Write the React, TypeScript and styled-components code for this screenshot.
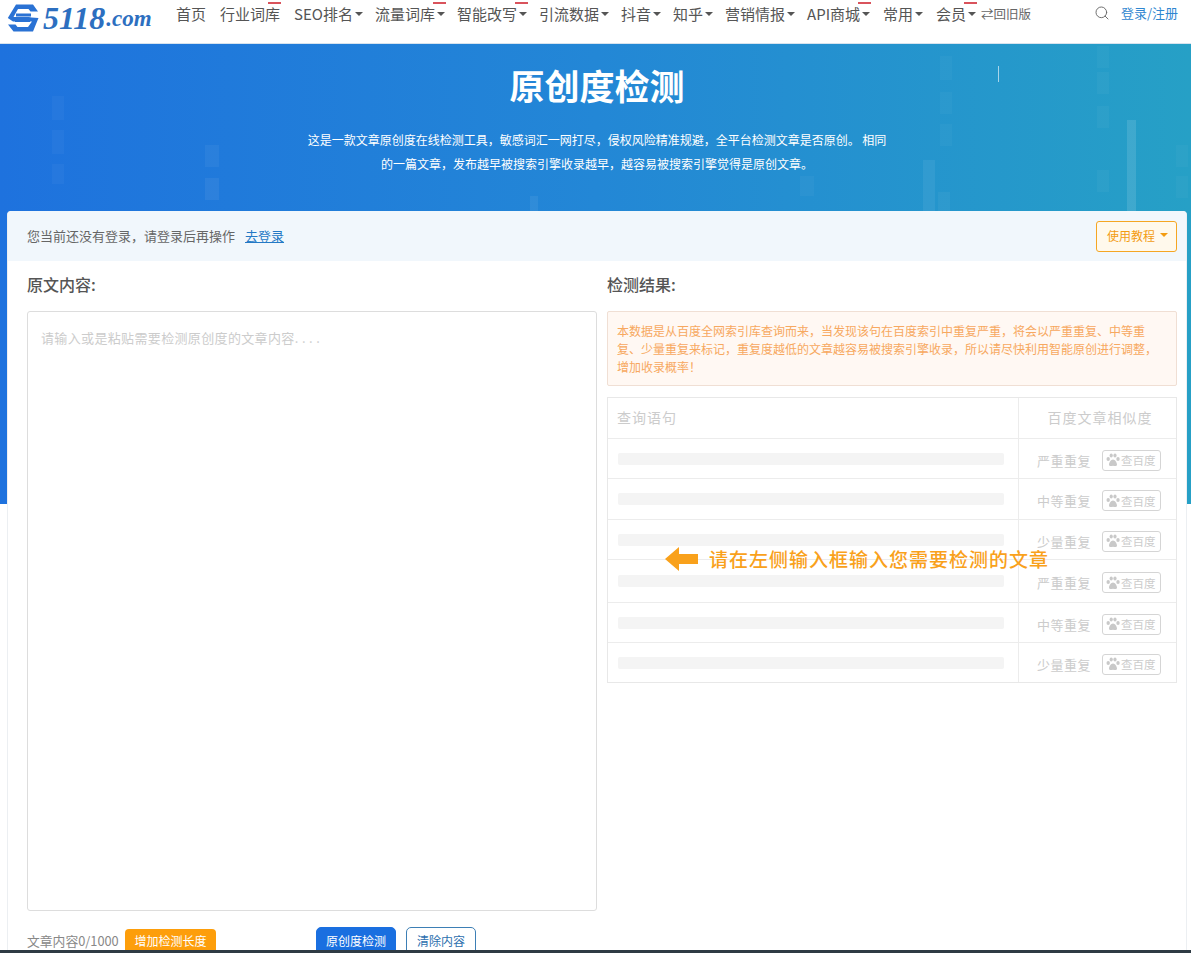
import React from "react";
import styled, { createGlobalStyle } from "styled-components";
import { Search } from "lucide-react";

const Global = createGlobalStyle`
  html, body { margin: 0; padding: 0; height: 953px; overflow: hidden; background: #fff; }
  body { font-family: "Noto Sans CJK SC", "Liberation Sans", sans-serif; color: #555; }
  * { box-sizing: border-box; }
`;

const Page = styled.div`
  display: flex;
  flex-direction: column;
  height: 953px;
  overflow: hidden;
`;

const Header = styled.header`
  flex: none;
  height: 44px;
  display: flex;
  align-items: flex-start;
  padding: 3px 13px 0 7px;
  background: #fff;
  border-bottom: 1px solid #d7e3ee;
`;

const Logo = styled.a`
  flex: none;
  width: 169px;
  height: 30px;
  display: flex;
  align-items: center;
  gap: 4px;
  color: #2d6fc0;
  font-family: "Liberation Serif", serif;
  font-style: italic;
  font-weight: 700;
  white-space: nowrap;
`;

const LogoDigits = styled.span`
  font-size: 32px;
  line-height: 36px;
`;

const LogoCom = styled.span`
  font-size: 23px;
  line-height: 36px;
  margin-left: -3px;
  padding-top: 2px;
`;

const Nav = styled.nav`
  display: flex;
  align-items: center;
  height: 23px;
  margin-top: -1px;
  flex: 1;
`;

const NavItem = styled.span<{ $gap?: number }>`
  position: relative;
  display: inline-flex;
  align-items: center;
  font-size: 15px;
  line-height: 23px;
  color: #555;
  white-space: nowrap;
  margin-right: ${(p) => p.$gap ?? 12}px;
`;

const Caret = styled.i`
  display: inline-block;
  width: 0;
  height: 0;
  margin-left: 2px;
  border-left: 4px solid transparent;
  border-right: 4px solid transparent;
  border-top: 4px solid #555;
`;

const HotMark = styled.b`
  position: absolute;
  top: 0;
  right: -1px;
  width: 13px;
  height: 2px;
  background: #d9535c;
`;

const OldLink = styled.span`
  font-size: 12.5px;
  line-height: 23px;
  color: #666;
  margin-left: -7px;
  white-space: nowrap;
`;

const RightTools = styled.div`
  display: flex;
  align-items: center;
  gap: 11px;
  height: 23px;
  margin-top: -2px;
  color: #666;
`;

const LoginLink = styled.a`
  font-size: 13px;
  color: #2f86d0;
  white-space: nowrap;
`;

const Hero = styled.section`
  position: relative;
  flex: none;
  height: 460px;
  padding: 15px 0 0 3px;
  text-align: center;
  background: linear-gradient(90deg, #1e72de 0%, #2387d6 50%, #26a0c6 100%);
  overflow: hidden;
`;

const HeroBars = styled.svg`
  position: absolute;
  left: 0;
  top: 0;
  width: 1191px;
  height: 170px;
  opacity: 0.6;
`;

const HeroTitle = styled.h1`
  position: relative;
  margin: 0;
  font-size: 35px;
  line-height: 52px;
  font-weight: 700;
  color: #fff;
`;

const HeroText = styled.p`
  position: relative;
  width: 584px;
  margin: 17px auto 0;
  font-size: 12px;
  line-height: 24px;
  color: #fff;
`;

const Card = styled.main`
  position: relative;
  flex: none;
  height: 760px;
  margin: -293px 4px 0 7px;
  background: #fff;
  border: 1px solid #eceff2;
  border-top: 0;
  border-radius: 4px 4px 0 0;
`;

const NoticeBar = styled.div`
  display: flex;
  align-items: center;
  justify-content: space-between;
  height: 50px;
  padding: 0 9px 0 19px;
  background: #f1f7fc;
  border-radius: 4px 4px 0 0;
  font-size: 13px;
  color: #666;
`;

const NoticeText = styled.span`
  padding-bottom: 2px;
`;

const NoticeLink = styled.a`
  margin-left: 10px;
  color: #2479c5;
  text-decoration: underline;
`;

const GuideButton = styled.button`
  display: flex;
  align-items: center;
  gap: 5px;
  width: 81px;
  height: 31px;
  padding: 0 0 2px 10px;
  background: #fff9ec;
  border: 1px solid #f5a623;
  border-radius: 3px;
  color: #f39c12;
  font: 12px "Noto Sans CJK SC", sans-serif;
`;

const GuideCaret = styled.i`
  width: 0;
  height: 0;
  border-left: 4px solid transparent;
  border-right: 4px solid transparent;
  border-top: 4px solid #f39c12;
`;

const Columns = styled.div`
  display: grid;
  grid-template-columns: 570px 570px;
  gap: 10px;
  padding: 0 9px 0 19px;
`;

const Column = styled.div`
  position: relative;
  display: flex;
  flex-direction: column;
`;

const SectionTitle = styled.h2`
  margin: 0;
  height: 50px;
  font-size: 16px;
  line-height: 46px;
  font-weight: 500;
  color: #555;
`;

const Editor = styled.textarea`
  display: block;
  width: 570px;
  height: 600px;
  padding: 16px 13px;
  border: 1px solid #ddd;
  border-radius: 3px;
  outline: none;
  resize: none;
  font: 13px/20px "Noto Sans CJK SC", sans-serif;
  letter-spacing: 0.35px;
  &::placeholder { color: #ccc; }
`;

const FooterBar = styled.div`
  display: flex;
  align-items: flex-start;
  height: 32px;
  margin-top: 16px;
  font-size: 12px;
`;

const CountText = styled.span`
  width: 98px;
  padding-top: 5px;
  font-size: 12.8px;
  line-height: 18px;
  color: #888;
  white-space: nowrap;
`;

const UpgradeButton = styled.button`
  width: 91px;
  height: 26px;
  margin: 2px 100px 0 0;
  padding: 0 0 3px;
  border: 0;
  border-radius: 4px;
  background: #fd9e0b;
  color: #fff;
  font: 12px "Noto Sans CJK SC", sans-serif;
`;

const ActionButton = styled.button<{ $primary?: boolean }>`
  width: ${(p) => (p.$primary ? 80 : 70)}px;
  height: 30px;
  margin-right: 10px;
  padding: 0 0 3px;
  border-radius: 5px;
  border: 1px solid ${(p) => (p.$primary ? "#1a6fe0" : "#3d7fb5")};
  background: ${(p) => (p.$primary ? "#1a6fe0" : "#fff")};
  color: ${(p) => (p.$primary ? "#fff" : "#2c6fae")};
  font: 12px "Noto Sans CJK SC", sans-serif;
`;

const Alert = styled.div`
  height: 75px;
  padding: 10px 9px;
  background: #fff8f3;
  border: 1px solid #f0dfd4;
  border-radius: 2px;
  font-size: 12px;
  line-height: 18px;
  color: #f7a860;
`;

const Table = styled.div`
  margin-top: 11px;
  border: 1px solid #e8e8e8;
`;

const Row = styled.div<{ $h: number }>`
  display: grid;
  grid-template-columns: 411px 1fr;
  height: ${(p) => p.$h}px;
  border-bottom: 1px solid #ececec;
  &:last-child { border-bottom: 0; }
`;

const QueryCell = styled.div`
  display: flex;
  align-items: center;
  padding-left: 10px;
  border-right: 1px solid #ececec;
  font-size: 14px;
  letter-spacing: 1px;
  color: #ccc;
`;

const HeadQueryCell = styled(QueryCell)`
  padding: 0 0 2px 9px;
`;

const HeadCell = styled.div`
  display: flex;
  align-items: center;
  justify-content: center;
  padding: 0 0 2px 5px;
  font-size: 14px;
  letter-spacing: 1px;
  color: #ccc;
`;

const Skeleton = styled.div`
  width: 386px;
  height: 12px;
  background: #f4f4f4;
  border-radius: 2px;
`;

const ResultCell = styled.div`
  display: flex;
  align-items: center;
  justify-content: flex-end;
  gap: 11px;
  padding: 3px 15px 0 0;
  font-size: 13px;
  letter-spacing: 0.5px;
  color: #ccc;
`;

const BaiduButton = styled.span`
  display: inline-flex;
  align-items: center;
  gap: 1px;
  width: 59px;
  height: 21px;
  padding-left: 3px;
  border: 1px solid #d5d5d5;
  border-radius: 3px;
  font-size: 11.5px;
  letter-spacing: 0;
  color: #ccc;
  white-space: nowrap;
`;

const Hint = styled.div`
  position: absolute;
  left: 58px;
  top: 284px;
  display: flex;
  align-items: center;
  gap: 11px;
  color: #f9a11b;
  font-size: 19px;
  line-height: 28px;
  font-weight: 500;
  letter-spacing: 1px;
  white-space: nowrap;
`;

const BottomStrip = styled.div`
  position: fixed;
  left: 0;
  right: 0;
  bottom: 0;
  height: 3px;
  background: #2f3b44;
`;

const navItems: { t: string; caret?: boolean; hot?: boolean; gap?: number }[] = [
  { t: "首页", gap: 14 },
  { t: "行业词库", hot: true, gap: 14 },
  { t: "SEO排名", caret: true },
  { t: "流量词库", caret: true, hot: true },
  { t: "智能改写", caret: true, hot: true },
  { t: "引流数据", caret: true },
  { t: "抖音", caret: true },
  { t: "知乎", caret: true },
  { t: "营销情报", caret: true },
  { t: "API商城", caret: true, hot: true, gap: 13 },
  { t: "常用", caret: true, gap: 13 },
  { t: "会员", caret: true, hot: true },
];

const rows = [
  { label: "严重重复", h: 40 },
  { label: "中等重复", h: 41 },
  { label: "少量重复", h: 40 },
  { label: "严重重复", h: 43 },
  { label: "中等重复", h: 40 },
  { label: "少量重复", h: 39 },
];

const bars = [
  [52, 96, 12, 24, 0.06], [52, 130, 12, 24, 0.06], [52, 164, 12, 20, 0.06],
  [205, 145, 14, 22, 0.08], [205, 178, 14, 22, 0.1],
  [530, 196, 8, 15, 0.1], [800, 176, 14, 20, 0.06],
  [940, 56, 12, 24, 0.05], [940, 92, 12, 22, 0.05], [940, 124, 12, 22, 0.05],
  [923, 160, 12, 51, 0.1], [938, 192, 12, 20, 0.07],
  [1097, 46, 12, 22, 0.05], [1097, 72, 12, 22, 0.06], [1097, 106, 12, 22, 0.06], [1097, 170, 12, 22, 0.06],
  [1127, 120, 9, 91, 0.2], [1176, 145, 12, 22, 0.05], [1176, 176, 12, 22, 0.05],
];

function LogoMark() {
  return (
    <svg width="32" height="30" viewBox="0 0 32 30" fill="none">
      <path
        d="M9 1.5H26L31 8.5H23.5L21.5 6H11L6.5 14H22L24.5 14.5L31.5 15L26 28.5H6.5L1 21.5H8.5L10.5 24H21L25 18.5H6L0.8 15Z"
        fill="#2a72d4"
      />
      <rect x="9" y="10.5" width="15" height="3" fill="#2a72d4" />
      <rect x="8" y="16" width="15" height="3" fill="#2a72d4" />
    </svg>
  );
}

function Paw() {
  return (
    <svg width="14" height="14" viewBox="0 0 14 14" fill="#c9c9c9">
      <ellipse cx="2.2" cy="6" rx="1.7" ry="2" />
      <ellipse cx="5.2" cy="2.6" rx="1.6" ry="2" />
      <ellipse cx="9" cy="2.6" rx="1.6" ry="2" />
      <ellipse cx="12" cy="6" rx="1.7" ry="2" />
      <path d="M7 6.5c2 0 4 3 4 5 0 1.5-1.6 1.8-4 1.2-2.4.6-4 .3-4-1.2 0-2 2-5 4-5z" />
    </svg>
  );
}

function HintArrow() {
  return (
    <svg width="33" height="24" viewBox="0 0 33 24" fill="#f9a11b">
      <path d="M0 12 14 0V7H33V17H14V24Z" />
    </svg>
  );
}

export default function App() {
  return (
    <Page>
      <Global />
      <Header>
        <Logo>
          <LogoMark />
          <LogoDigits>5118</LogoDigits>
          <LogoCom>.com</LogoCom>
        </Logo>
        <Nav>
          {navItems.map((n) => (
            <NavItem key={n.t} $gap={n.gap}>
              {n.t}
              {n.caret && <Caret />}
              {n.hot && <HotMark />}
            </NavItem>
          ))}
          <OldLink>⇄回旧版</OldLink>
        </Nav>
        <RightTools>
          <Search size={16} strokeWidth={1.4} />
          <LoginLink>登录/注册</LoginLink>
        </RightTools>
      </Header>
      <Hero>
        <HeroBars viewBox="0 0 1191 170" aria-hidden="true">
          {bars.map(([x, y, w, h, o], i) => (
            <rect key={i} x={x} y={y - 44} width={w} height={h} fill="#fff" opacity={o} />
          ))}
          <rect x="998" y="22" width="1" height="16" fill="#fff" />
        </HeroBars>
        <HeroTitle>原创度检测</HeroTitle>
        <HeroText>
          这是一款文章原创度在线检测工具，敏感词汇一网打尽，侵权风险精准规避，全平台检测文章是否原创。 相同的一篇文章，发布越早被搜索引擎收录越早，越容易被搜索引擎觉得是原创文章。
        </HeroText>
      </Hero>
      <Card>
        <NoticeBar>
          <NoticeText>
            您当前还没有登录，请登录后再操作
            <NoticeLink>去登录</NoticeLink>
          </NoticeText>
          <GuideButton>
            使用教程
            <GuideCaret />
          </GuideButton>
        </NoticeBar>
        <Columns>
          <Column>
            <SectionTitle>原文内容:</SectionTitle>
            <Editor placeholder="请输入或是粘贴需要检测原创度的文章内容. . . ." />
            <FooterBar>
              <CountText>文章内容0/1000</CountText>
              <UpgradeButton>增加检测长度</UpgradeButton>
              <ActionButton $primary>原创度检测</ActionButton>
              <ActionButton>清除内容</ActionButton>
            </FooterBar>
          </Column>
          <Column>
            <SectionTitle>检测结果:</SectionTitle>
            <Alert>
              本数据是从百度全网索引库查询而来，当发现该句在百度索引中重复严重，将会以严重重复、中等重复、少量重复来标记，重复度越低的文章越容易被搜索引擎收录，所以请尽快利用智能原创进行调整，增加收录概率！
            </Alert>
            <Table>
              <Row $h={41}>
                <HeadQueryCell>查询语句</HeadQueryCell>
                <HeadCell>百度文章相似度</HeadCell>
              </Row>
              {rows.map((r, i) => (
                <Row key={i} $h={r.h}>
                  <QueryCell>
                    <Skeleton />
                  </QueryCell>
                  <ResultCell>
                    {r.label}
                    <BaiduButton>
                      <Paw />
                      查百度
                    </BaiduButton>
                  </ResultCell>
                </Row>
              ))}
            </Table>
            <Hint>
              <HintArrow />
              请在左侧输入框输入您需要检测的文章
            </Hint>
          </Column>
        </Columns>
      </Card>
      <BottomStrip />
    </Page>
  );
}
